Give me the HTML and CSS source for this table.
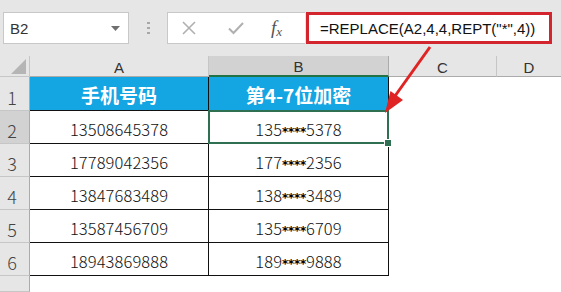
FILE: index.html
```html
<!DOCTYPE html>
<html lang="zh-CN">
<head>
<meta charset="utf-8">
<link rel="stylesheet" href="styles.css">
</head>
<body>
<div class="app">
  <div class="toolbar">
    <div class="namebox">
      <span class="ref">B2</span>
      <svg class="dd" width="9" height="5" viewBox="0 0 9 5"><path d="M0 0H9L4.5 5Z" fill="#707070"/></svg>
    </div>
    <div class="grip"><i></i><i></i><i></i></div>
    <div class="fxbox">
      <svg class="ico" width="14" height="14" viewBox="0 0 14 14"><path d="M1 1L13 13M13 1L1 13" stroke="#b0b0b0" stroke-width="1.6" fill="none"/></svg>
      <svg class="ico" width="16" height="14" viewBox="0 0 16 14"><path d="M1 7.5L5.5 12L15 2" stroke="#b0b0b0" stroke-width="2" fill="none"/></svg>
      <span class="fx">f<sub>x</sub></span>
    </div>
    <div class="formula">=REPLACE(A2,4,4,REPT("*",4))</div>
  </div>
  <div class="sheet">
    <div class="corner"><svg width="15" height="15" viewBox="0 0 15 15"><path d="M15 0V15H0Z" fill="#b5b5b5"/></svg></div>
    <div class="colh">A</div>
    <div class="colh sel">B</div>
    <div class="colh">C</div>
    <div class="colh last">D</div>

    <div class="rowh">1</div>
    <div class="cell head">手机号码</div>
    <div class="cell head">第4-7位加密</div>
    <div class="fill"></div>

    <div class="rowh selr">2</div>
    <div class="cell">13508645378</div>
    <div class="cell active">135<span class="st">****</span>5378</div>
    <div class="fill"></div>

    <div class="rowh">3</div>
    <div class="cell">17789042356</div>
    <div class="cell">177<span class="st">****</span>2356</div>
    <div class="fill"></div>

    <div class="rowh">4</div>
    <div class="cell">13847683489</div>
    <div class="cell">138<span class="st">****</span>3489</div>
    <div class="fill"></div>

    <div class="rowh">5</div>
    <div class="cell">13587456709</div>
    <div class="cell">135<span class="st">****</span>6709</div>
    <div class="fill"></div>

    <div class="rowh">6</div>
    <div class="cell">18943869888</div>
    <div class="cell">189<span class="st">****</span>9888</div>
    <div class="fill"></div>

    <div class="rowh"></div>
    <div class="fill wide"></div>
  </div>
  <svg class="arrow" width="561" height="292" viewBox="0 0 561 292">
    <path d="M430 47L395 96" stroke="#e02424" stroke-width="3" fill="none"/>
    <path d="M385 113L390.5 91L403 100Z" fill="#e02424"/>
  </svg>
</div>
</body>
</html>
```
FILE: styles.css
```css
* { box-sizing: border-box; }
html, body { margin: 0; padding: 0; background: #fff; }
.app {
  position: relative;
  width: 561px;
  height: 292px;
  overflow: hidden;
  font-family: "Noto Sans CJK SC", "Noto Sans", sans-serif;
}
.toolbar {
  height: 56px;
  background: #e6e6e6;
  display: flex;
  align-items: flex-start;
  padding: 12px 0 0 3px;
}
.namebox {
  width: 126px;
  height: 32px;
  background: #fff;
  border: 1px solid #c8c8c8;
  display: flex;
  align-items: center;
  justify-content: space-between;
  padding: 0 8px 0 6px;
}
.ref {
  font-family: "Liberation Sans", sans-serif;
  font-size: 15px;
  color: #333;
}
.grip {
  width: 38px;
  height: 32px;
  display: flex;
  flex-direction: column;
  align-items: center;
  justify-content: center;
  gap: 3px;
}
.grip i {
  display: block;
  width: 3px;
  height: 2px;
  background: #a8a8a8;
}
.fxbox {
  width: 138px;
  height: 32px;
  background: #fff;
  border: 1px solid #c8c8c8;
  border-right: none;
  display: flex;
  align-items: center;
  padding-left: 14px;
}
.fxbox .ico:first-child { margin-right: 32px; }
.fxbox .ico:nth-child(2) { margin-right: 27px; }
.fx {
  font-family: "Liberation Serif", serif;
  font-style: italic;
  font-size: 19px;
  color: #555;
  line-height: 1;
}
.fx sub { font-size: 13px; vertical-align: -2px; }
.formula {
  width: 246px;
  height: 32px;
  background: #fff;
  border: 3px solid #d3252d;
  margin-left: 1px;
  font-family: "Liberation Sans", sans-serif;
  font-size: 15px;
  color: #111;
  display: flex;
  align-items: center;
  padding-left: 11px;
}
.sheet {
  display: grid;
  grid-template-columns: 30px 179px 180px 108px 1fr;
  grid-template-rows: 21px 34px repeat(5, 33px) 1fr;
  height: 236px;
}
.corner {
  background: #e6e6e6;
  border-right: 1px solid #c6c6c6;
  border-bottom: 1px solid #c6c6c6;
  display: flex;
  align-items: flex-end;
  justify-content: flex-end;
  padding: 0 3px 2px 0;
}
.corner svg { display: block; }
.colh {
  background: #e6e6e6;
  border-right: 1px solid #c6c6c6;
  border-bottom: 1px solid #ababab;
  display: flex;
  align-items: center;
  justify-content: center;
  font-family: "Liberation Sans", sans-serif;
  font-size: 15px;
  color: #333;
  padding-top: 2px;
}
.colh.last { border-right: none; }
.colh.sel {
  background: #d2d2d2;
  border-bottom: 2px solid #217346;
  border-right-color: #ababab;
}
.rowh {
  background: #e6e6e6;
  border-right: 1px solid #ababab;
  border-bottom: 1px solid #c6c6c6;
  display: flex;
  align-items: flex-end;
  justify-content: center;
  font-size: 18px;
  font-weight: 300;
  color: #444;
  line-height: 1;
  padding: 0 5px 4px 0;
}
.rowh.selr { background: #d2d2d2; }
.cell {
  border-right: 1px solid #111;
  border-bottom: 1px solid #111;
  display: flex;
  align-items: center;
  justify-content: center;
  font-size: 16.5px;
  font-weight: 300;
  letter-spacing: 0.1px;
  color: #111;
  padding-top: 3px;
  position: relative;
}
.cell.head {
  background: #14a5e3;
  color: #fff;
  font-weight: 700;
  font-size: 19px;
  letter-spacing: 0;
  padding-top: 2px;
}
.st {
  font-family: "DejaVu Sans", sans-serif;
  font-size: 12px;
  font-weight: 700;
  color: #000;
  letter-spacing: -0.3px;
  position: relative;
  top: 3px;
}
.fill { grid-column: span 2; }
.fill.wide { grid-column: span 4; }
.cell.active::after {
  content: "";
  position: absolute;
  top: -1px;
  left: -1px;
  right: -1px;
  bottom: -1px;
  border: 2px solid #2f6f52;
}
.cell.active::before {
  content: "";
  position: absolute;
  right: -4px;
  bottom: -4px;
  width: 6px;
  height: 6px;
  background: #2f6f52;
  border: 1px solid #fff;
  z-index: 2;
}
.arrow {
  position: absolute;
  left: 0;
  top: 0;
  pointer-events: none;
}
```
